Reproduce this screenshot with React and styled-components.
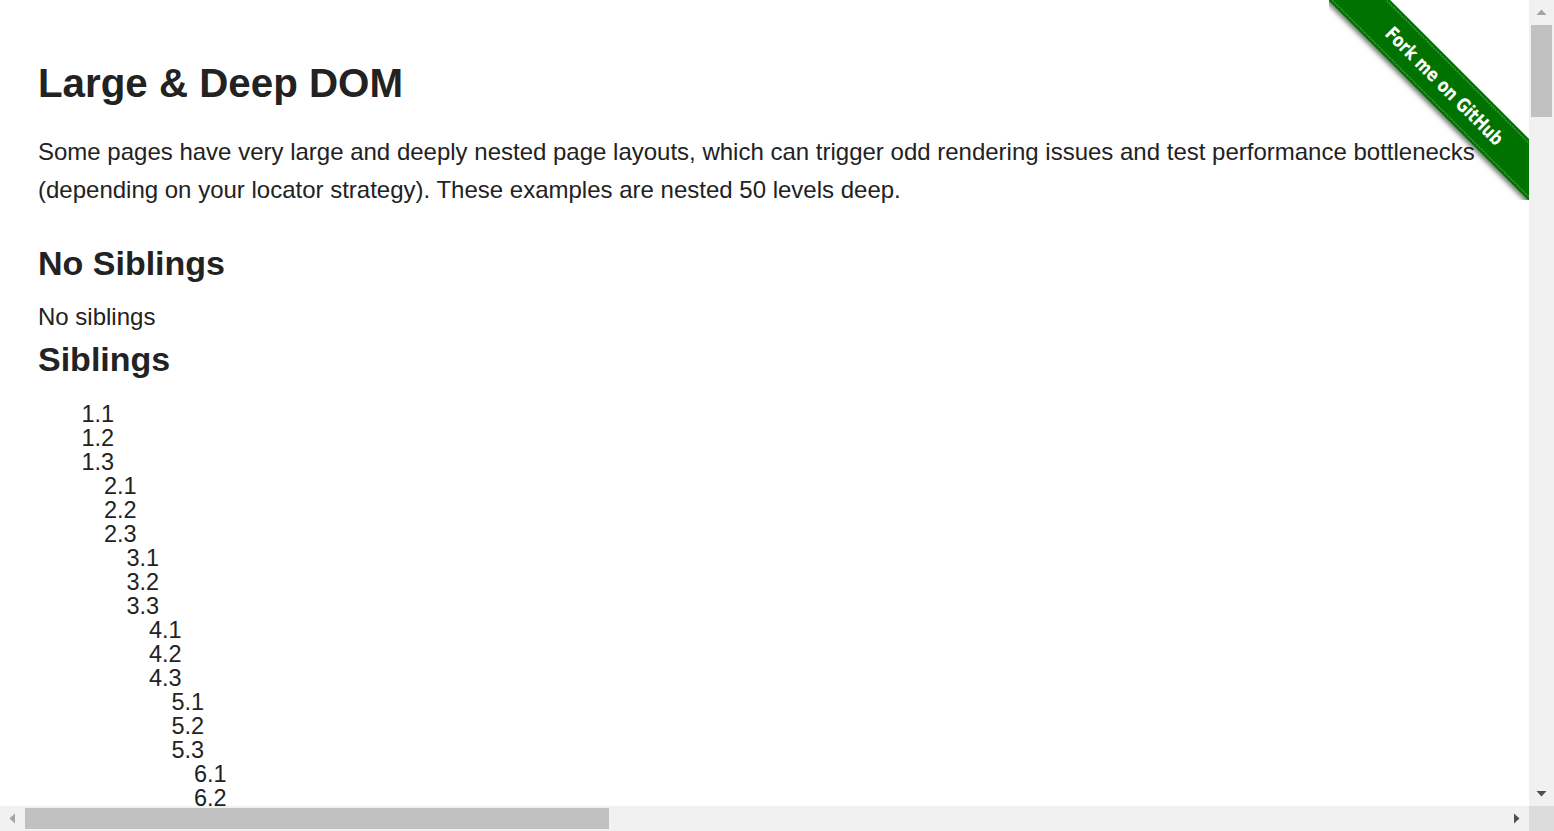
import React from "react";
import styled, { createGlobalStyle } from "styled-components";

const LEVELS = 50;
const COLUMNS = 50;

function App() {
  return (
    <>
      <GlobalStyle />
      <Frame>
        <Viewport>
          <Page>
            <Title>Large &amp; Deep DOM</Title>
            <Lead>
              Some pages have very large and deeply nested page layouts, which
              can trigger odd rendering issues and test performance bottlenecks
              (depending on your locator strategy). These examples are nested 50
              levels deep.
            </Lead>
            <SectionTitle $top={34}>No Siblings</SectionTitle>
            <Note>No siblings</Note>
            <SectionTitle $top={4}>Siblings</SectionTitle>
            <Tree>
              <Level depth={1} />
            </Tree>
            <SectionTitle $top={30}>Table</SectionTitle>
            <BigTable>
              <thead>
                <tr>
                  {Array.from({ length: COLUMNS }, (_, i) => (
                    <th key={i}>Heading {i + 1}</th>
                  ))}
                </tr>
              </thead>
              <tbody>
                {Array.from({ length: LEVELS }, (_, r) => (
                  <tr key={r}>
                    {Array.from({ length: COLUMNS }, (_, c) => (
                      <td key={c}>
                        {r + 1}.{c + 1}
                      </td>
                    ))}
                  </tr>
                ))}
              </tbody>
            </BigTable>
          </Page>
          <Ribbon />
        </Viewport>

        <VBar>
          <ArrowButton>
            <Arrow dir="up" muted />
          </ArrowButton>
          <VTrack>
            <VThumb />
          </VTrack>
          <ArrowButton>
            <Arrow dir="down" />
          </ArrowButton>
        </VBar>
        <HBar>
          <ArrowButton>
            <Arrow dir="left" muted />
          </ArrowButton>
          <HTrack>
            <HThumb />
          </HTrack>
          <ArrowButton>
            <Arrow dir="right" />
          </ArrowButton>
        </HBar>
        <Corner />
      </Frame>
    </>
  );
}

function Level({ depth }) {
  return (
    <LevelBox>
      <Row>{depth}.1</Row>
      <Row>{depth}.2</Row>
      <Row>{depth}.3</Row>
      {depth < LEVELS && <Level depth={depth + 1} />}
    </LevelBox>
  );
}

const rotations = { up: 0, right: 90, down: 180, left: 270 };

function Arrow({ dir, muted }) {
  return (
    <svg width="11" height="11" viewBox="0 0 11 11">
      <polygon
        points="0.5,8 10.5,8 5.5,2.5"
        fill={muted ? "#a3a3a3" : "#505050"}
        transform={`rotate(${rotations[dir]} 5.5 5.5)`}
      />
    </svg>
  );
}

function Ribbon() {
  return (
    <RibbonSvg width="200" height="200" viewBox="0 0 200 200">
      <defs>
        <filter id="ribbon-shadow" x="-20%" y="-50%" width="140%" height="200%">
          <feDropShadow dx="-2" dy="3" stdDeviation="2" floodColor="#000" floodOpacity="0.5" />
        </filter>
      </defs>
      <g transform="translate(115 85) rotate(45)">
        <rect x="-160" y="-22" width="320" height="44" fill="#007200" filter="url(#ribbon-shadow)" />
        <line x1="-160" y1="-19" x2="160" y2="-19" stroke="#fff" strokeOpacity="0.35" strokeWidth="1" strokeDasharray="2 1" />
        <line x1="-160" y1="19" x2="160" y2="19" stroke="#fff" strokeOpacity="0.35" strokeWidth="1" strokeDasharray="2 1" />
        <text
          x="1"
          y="7"
          fill="#fff"
          fontSize="19"
          fontWeight="bold"
          textAnchor="middle"
          textLength="158"
          lengthAdjust="spacingAndGlyphs"
          fontFamily="'DejaVu Sans Condensed', 'Liberation Sans', sans-serif"
        >
          Fork me on GitHub
        </text>
      </g>
    </RibbonSvg>
  );
}

const GlobalStyle = createGlobalStyle`
  html, body {
    margin: 0;
    padding: 0;
    overflow: hidden;
    background: #fff;
  }
  body {
    font-family: "Liberation Sans", Arial, Helvetica, sans-serif;
    color: #222;
  }
`;

const Frame = styled.div`
  display: grid;
  grid-template-columns: 1fr 25px;
  grid-template-rows: 1fr 25px;
  width: 100vw;
  height: 100vh;
`;

const Viewport = styled.div`
  position: relative;
  overflow: hidden;
  background: #fff;
`;

const Page = styled.div`
  padding: 0 38px;
`;

const Title = styled.h1`
  margin: 60px 0 0;
  font-size: 40.3px;
  line-height: 48px;
  font-weight: bold;
`;

const Lead = styled.p`
  margin: 25px 0 0;
  font-size: 24px;
  line-height: 38px;
`;

const SectionTitle = styled.h2`
  margin: ${(p) => p.$top}px 0 0;
  font-size: 34px;
  line-height: 41px;
  font-weight: bold;
`;

const Note = styled.div`
  margin-top: 15px;
  font-size: 24px;
  line-height: 36px;
`;

const Tree = styled.div`
  margin-top: 22px;
  padding-left: 21px;
  font-size: 23.5px;
  line-height: 24px;
`;

const LevelBox = styled.div`
  padding-left: 22.5px;
`;

const Row = styled.div`
  white-space: nowrap;
`;

const BigTable = styled.table`
  margin-top: 20px;
  border-collapse: collapse;
  font-size: 20px;

  th,
  td {
    min-width: 70px;
    padding: 12px 4px;
    border-bottom: 1px solid #ddd;
    text-align: left;
    white-space: nowrap;
  }
`;

const RibbonSvg = styled.svg`
  position: absolute;
  top: 0;
  right: 0;
`;

const VBar = styled.div`
  display: flex;
  flex-direction: column;
  background: #f1f1f1;
`;

const HBar = styled.div`
  display: flex;
  background: #f1f1f1;
`;

const ArrowButton = styled.div`
  flex: 0 0 25px;
  height: 25px;
  display: flex;
  align-items: center;
  justify-content: center;
`;

const VTrack = styled.div`
  flex: 1;
  padding: 0 2px;
`;

const VThumb = styled.div`
  height: 92px;
  background: #c1c1c1;
`;

const HTrack = styled.div`
  flex: 1;
  padding: 2px 0;
`;

const HThumb = styled.div`
  width: 584px;
  height: 100%;
  background: #c1c1c1;
`;

const Corner = styled.div`
  background: #dcdcdc;
`;

export default App;
